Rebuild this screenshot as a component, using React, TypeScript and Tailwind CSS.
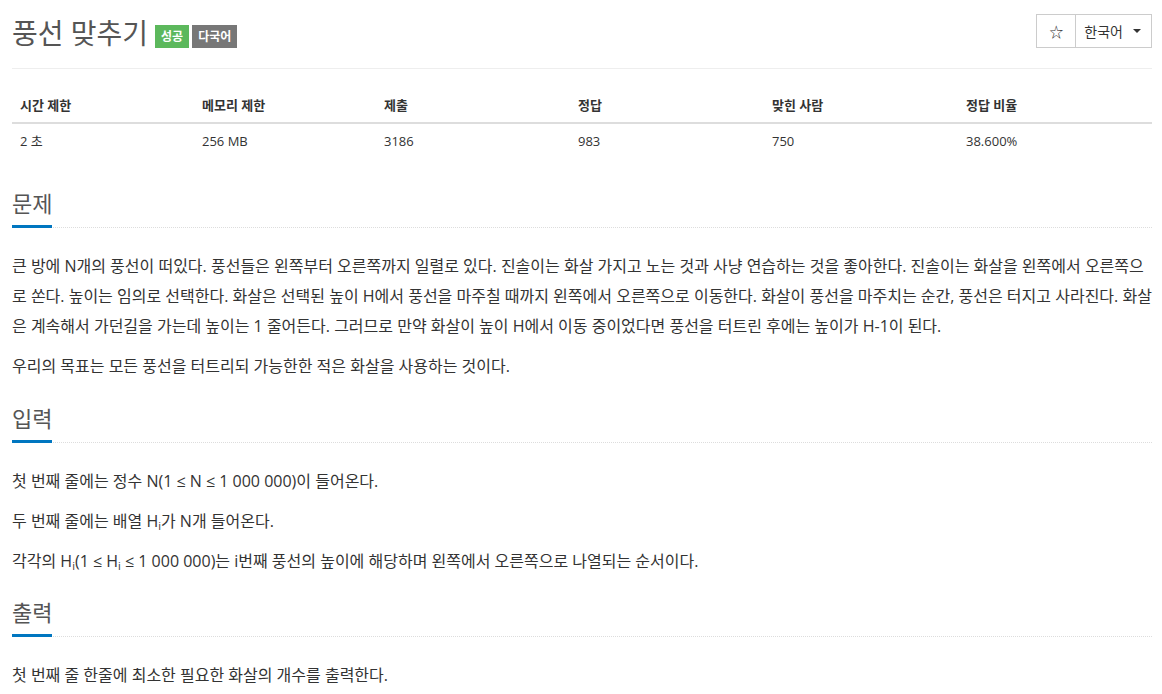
const font = { fontFamily: '"Open Sans", "Noto Sans CJK KR", sans-serif' };

const stats = [
  { label: "시간 제한", value: "2 초", w: "w-[182px]" },
  { label: "메모리 제한", value: "256 MB", w: "w-[182px]" },
  { label: "제출", value: "3186", w: "w-[194px]" },
  { label: "정답", value: "983", w: "w-[194px]" },
  { label: "맞힌 사람", value: "750", w: "w-[194px]" },
  { label: "정답 비율", value: "38.600%", w: "flex-1" },
];

const Headline = ({ title }: { title: string }) => (
  <div className="border-b border-dotted border-[#ddd] mb-[23px]">
    <h2 className="inline-block text-[22px] leading-[30px] text-[#555] pb-[7px] border-b-[3px] border-[#0076c0] -mb-px">
      {title}
    </h2>
  </div>
);

export default function App() {
  return (
    <div className="bg-white min-h-screen pl-3 pr-[10px] pt-[12px] text-[#333]" style={font}>
      {/* TITLE */}
      <div className="flex items-start justify-between pb-[14px] border-b border-[#eee]">
        <div className="flex items-end gap-[3px]">
          <h1 className="text-[28px] leading-[42px] text-[#555] mr-[4px]">풍선 맞추기</h1>
          <span className="mb-[6px] px-[6px] h-[23px] leading-[23px] bg-[#5cb85c] text-white text-[12px] font-bold">
            성공
          </span>
          <span className="mb-[6px] px-[6px] h-[23px] leading-[23px] bg-[#777] text-white text-[12px] font-bold">
            다국어
          </span>
        </div>
        <div className="flex mt-[2px] text-[14px] text-[#333]">
          <button className="w-[40px] h-[34px] border border-[#ccc] flex items-center justify-center text-[14px]">
            ☆
          </button>
          <button className="h-[34px] pl-[8px] pr-[10px] border border-l-0 border-[#ccc] flex items-center gap-[10px]">
            한국어
            <span className="w-0 h-0 border-l-[4px] border-r-[4px] border-t-[4px] border-l-transparent border-r-transparent border-t-[#333]" />
          </button>
        </div>
      </div>

      {/* STATS */}
      <div className="mt-[19px] mb-[30px] text-[13px]">
        <div className="flex border-b-2 border-[#ddd] font-bold">
          {stats.map((s, i) => (
            <div key={i} className={`${s.w} px-2 py-2 leading-[18px]`}>
              {s.label}
            </div>
          ))}
        </div>
        <div className="flex">
          {stats.map((s, i) => (
            <div key={i} className={`${s.w} px-2 py-2 leading-[18px]`}>
              {s.value}
            </div>
          ))}
        </div>
      </div>

      {/* 문제 */}
      <Headline title="문제" />
      <div className="text-[16px] leading-[30px]">
        <p className="mb-[10px]">
          큰 방에 N개의 풍선이 떠있다. 풍선들은 왼쪽부터 오른쪽까지 일렬로 있다. 진솔이는 화살 가지고 노는 것과 사냥 연습하는 것을 좋아한다. 진솔이는 화살을 왼쪽에서 오른쪽으로 쏜다. 높이는 임의로 선택한다. 화살은 선택된 높이 H에서 풍선을 마주칠 때까지 왼쪽에서 오른쪽으로 이동한다. 화살이 풍선을 마주치는 순간, 풍선은 터지고 사라진다. 화살은 계속해서 가던길을 가는데 높이는 1 줄어든다. 그러므로 만약 화살이 높이 H에서 이동 중이었다면 풍선을 터트린 후에는 높이가 H-1이 된다.
        </p>
        <p className="mb-[22px]">우리의 목표는 모든 풍선을 터트리되 가능한한 적은 화살을 사용하는 것이다.</p>
      </div>

      {/* 입력 */}
      <Headline title="입력" />
      <div className="text-[16px] leading-[30px]">
        <p className="mb-[10px]">첫 번째 줄에는 정수 N(1 ≤ N ≤ 1 000 000)이 들어온다.</p>
        <p className="mb-[10px]">
          두 번째 줄에는 배열 H<sub className="text-[11px]">i</sub>가 N개 들어온다.
        </p>
        <p className="mb-[21px]">
          각각의 H<sub className="text-[11px]">i</sub>(1 ≤ H<sub className="text-[11px]">i</sub> ≤ 1 000 000)는 i번째 풍선의 높이에 해당하며 왼쪽에서 오른쪽으로 나열되는 순서이다.
        </p>
      </div>

      {/* 출력 */}
      <Headline title="출력" />
      <div className="text-[16px] leading-[30px]">
        <p className="mb-[10px]">첫 번째 줄 한줄에 최소한 필요한 화살의 개수를 출력한다.</p>
      </div>
    </div>
  );
}
